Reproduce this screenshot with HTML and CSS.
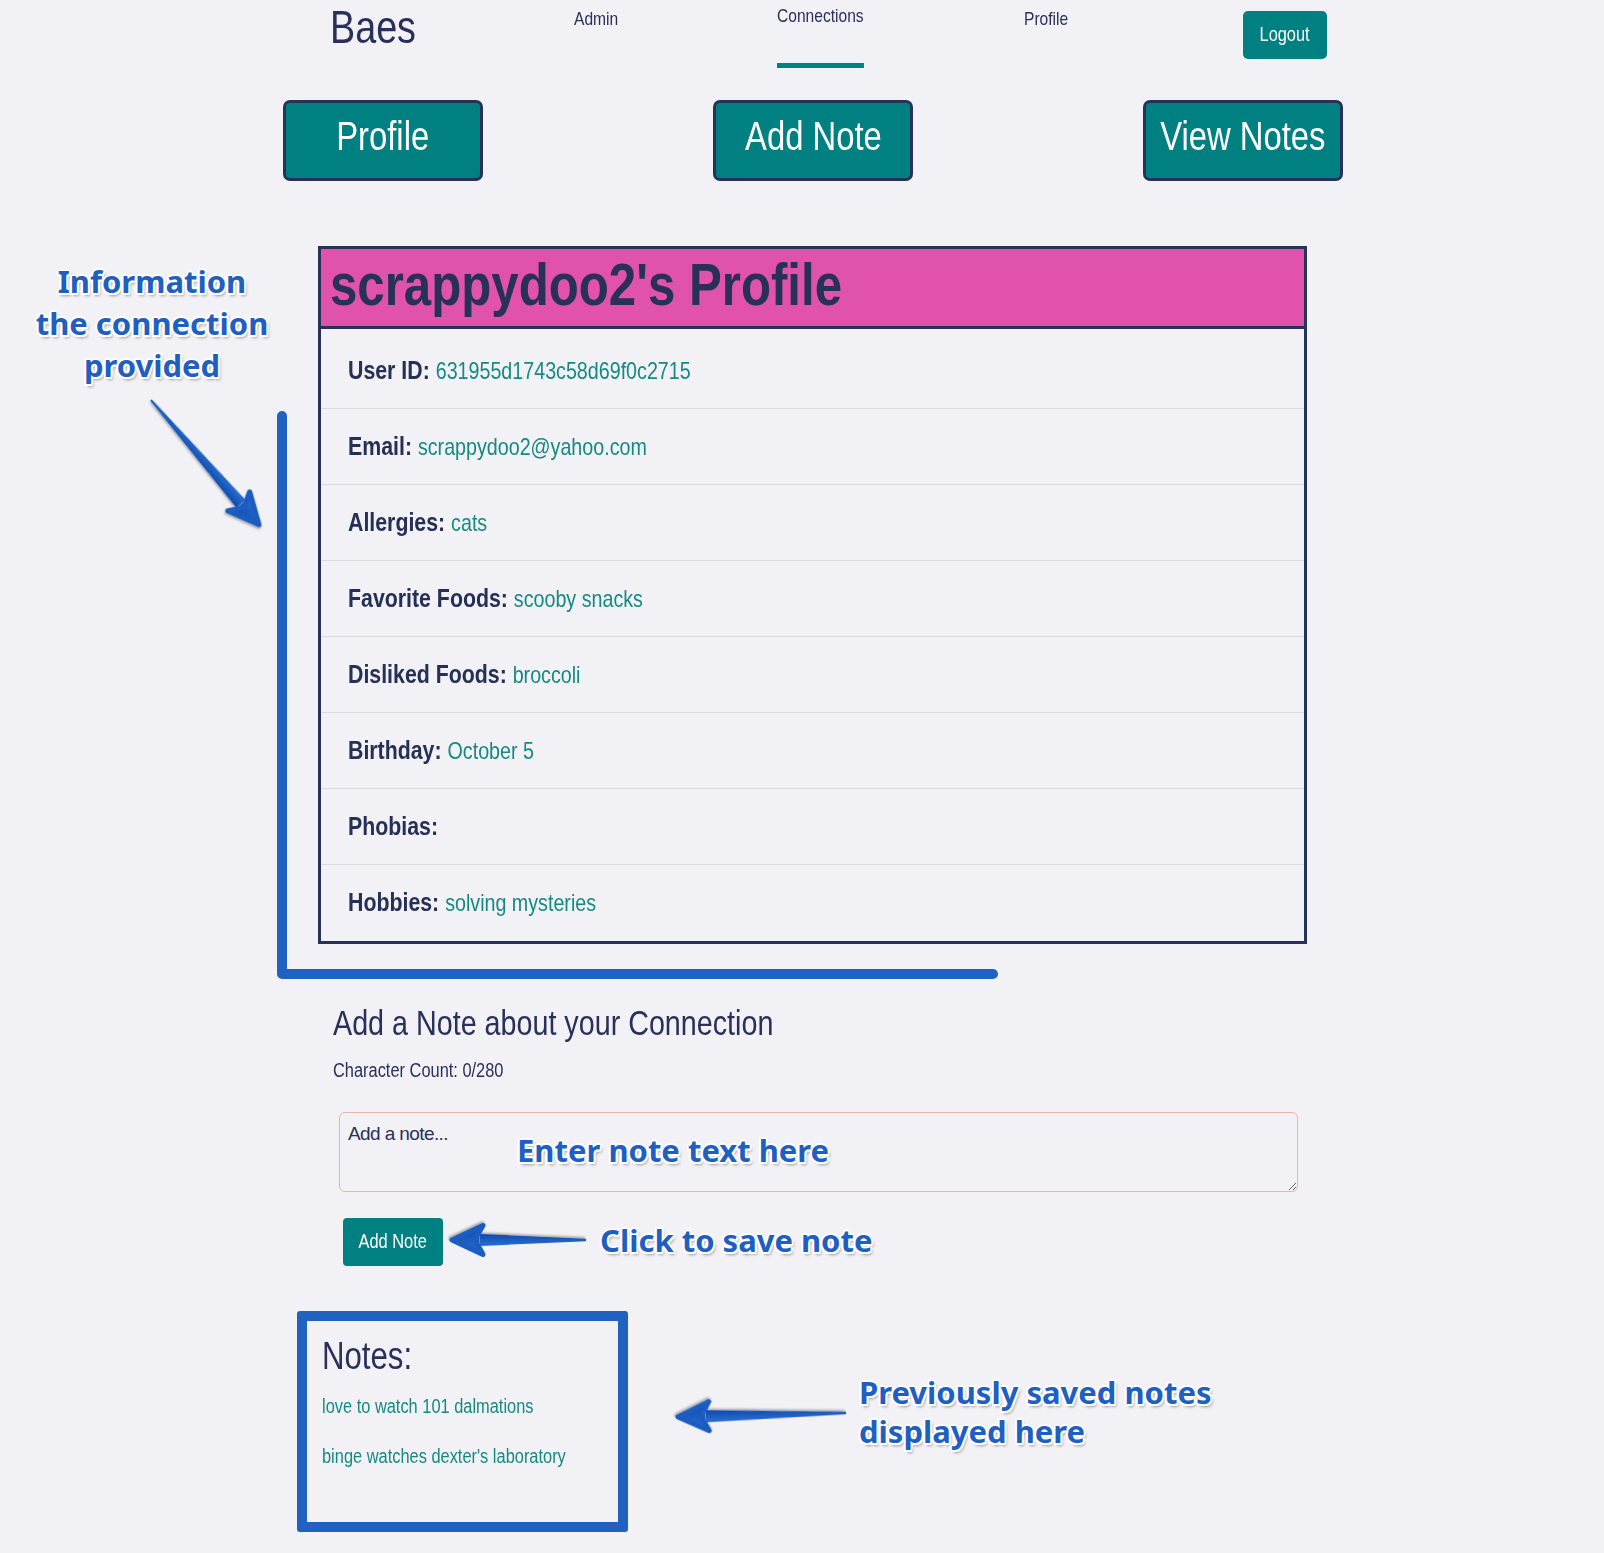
FILE: index.html
```html
<!DOCTYPE html>
<html lang="en">
<head>
<meta charset="utf-8">
<title>Baes - Connection Profile</title>
<link rel="stylesheet" href="styles.css">
</head>
<body>
<div class="page">
  <ul class="topnav">
    <li class="nav-item nav-brand-item"><a class="nav-brand sq">Baes</a></li>
    <li class="nav-item nav-admin"><a class="nav-link sq">Admin</a></li>
    <li class="nav-item nav-conn"><a class="nav-link active sq">Connections</a></li>
    <li class="nav-item nav-prof"><a class="nav-link sq">Profile</a></li>
    <li class="nav-item"><button class="logout"><span class="sq sq-c">Logout</span></button></li>
  </ul>

  <div class="tabs">
    <button class="tab-btn"><span class="sq sq-c">Profile</span></button>
    <button class="tab-btn"><span class="sq sq-c">Add Note</span></button>
    <button class="tab-btn"><span class="sq sq-c">View Notes</span></button>
  </div>

  <section class="profile-card">
    <h1 class="profile-title"><span class="sq">scrappydoo2's Profile</span></h1>
    <ul class="fields">
      <li class="field"><span class="sq"><span class="label">User ID:</span> <span class="value">631955d1743c58d69f0c2715</span></span></li>
      <li class="field"><span class="sq"><span class="label">Email:</span> <span class="value">scrappydoo2@yahoo.com</span></span></li>
      <li class="field"><span class="sq"><span class="label">Allergies:</span> <span class="value">cats</span></span></li>
      <li class="field"><span class="sq"><span class="label">Favorite Foods:</span> <span class="value">scooby snacks</span></span></li>
      <li class="field"><span class="sq"><span class="label">Disliked Foods:</span> <span class="value">broccoli</span></span></li>
      <li class="field"><span class="sq"><span class="label">Birthday:</span> <span class="value">October 5</span></span></li>
      <li class="field"><span class="sq"><span class="label">Phobias:</span> <span class="value"></span></span></li>
      <li class="field"><span class="sq"><span class="label">Hobbies:</span> <span class="value">solving mysteries</span></span></li>
    </ul>
  </section>

  <section class="note-form">
    <h2 class="note-heading"><span class="sq">Add a Note about your Connection</span></h2>
    <p class="char-count"><span class="sq">Character Count: 0/280</span></p>
    <textarea class="note-input" placeholder="Add a note..."></textarea>
    <button class="add-note"><span class="sq sq-c">Add Note</span></button>
  </section>

  <section class="notes-box">
    <h3 class="notes-title"><span class="sq">Notes:</span></h3>
    <p class="note"><span class="sq">love to watch 101 dalmations</span></p>
    <p class="note note-second"><span class="sq">binge watches dexter's laboratory</span></p>
  </section>

  <svg class="overlay" width="1604" height="1553" viewBox="0 0 1604 1553" aria-hidden="true">
    <defs>
      <linearGradient id="ag" x1="0" y1="0" x2="0" y2="1">
        <stop offset="0" stop-color="#2c6fd2"/>
        <stop offset="1" stop-color="#0c4aab"/>
      </linearGradient>
      <filter id="sh" x="-20%" y="-50%" width="140%" height="200%">
        <feDropShadow dx="1" dy="1.5" stdDeviation="0.8" flood-color="#000" flood-opacity="0.35"/>
      </filter>
    </defs>
    <path d="M282 416 V974 H993" fill="none" stroke="#2162c0" stroke-width="10" stroke-linecap="round" stroke-linejoin="round"/>
    <g filter="url(#sh)" transform="translate(151 400) rotate(49.1)">
      <path d="M0 -1 L137 -6 L137 6 L0 1 Z" fill="url(#ag)"/>
      <path d="M165 0 L134 -14.5 L140 -4 L140 4 L134 14.5 Z" fill="url(#ag)" stroke="#1a5cc0" stroke-width="5" stroke-linejoin="round"/>
    </g>
    <g filter="url(#sh)" transform="translate(586 1240) rotate(180)">
      <path d="M0 -1.2 L106 -6 L106 6 L0 1.2 Z" fill="url(#ag)"/>
      <path d="M134 0 L103 -14.5 L109 -4 L109 4 L103 14.5 Z" fill="url(#ag)" stroke="#1a5cc0" stroke-width="5" stroke-linejoin="round"/>
    </g>
    <g filter="url(#sh)" transform="translate(846 1413) rotate(178.65)">
      <path d="M0 -1.2 L140 -6 L140 6 L0 1.2 Z" fill="url(#ag)"/>
      <path d="M168 0 L137 -14.5 L143 -4 L143 4 L137 14.5 Z" fill="url(#ag)" stroke="#1a5cc0" stroke-width="5" stroke-linejoin="round"/>
    </g>
  </svg>

  <div class="callout callout-info">Information<br>the connection<br>provided</div>
  <div class="callout callout-enter">Enter note text here</div>
  <div class="callout callout-click">Click to save note</div>
  <div class="callout callout-notes">Previously saved notes<br>displayed here</div>
</div>
</body>
</html>
```

FILE: styles.css
```css
* { box-sizing: border-box; }

body {
  margin: 0;
  background: #f2f1f5;
  font-family: "Liberation Sans", Arial, sans-serif;
  color: #29305a;
}

.page {
  position: relative;
  width: 1604px;
  height: 1553px;
  overflow: hidden;
}

/* narrow lettering (the app font is a tall, condensed face) */
.sq {
  display: inline-block;
  white-space: nowrap;
  transform: scaleX(0.82);
  transform-origin: left center;
}
.sq-c { transform-origin: center center; }

/* top navigation */
.topnav {
  display: flex;
  align-items: flex-start;
  height: 70px;
  margin: 0;
  padding: 0 0 0 330px;
  list-style: none;
}
.nav-brand-item { width: 244px; }
.nav-admin { width: 203px; }
.nav-conn { width: 247px; }
.nav-prof { width: 219px; }

.nav-brand {
  font-size: 46px;
  line-height: 50px;
  padding-top: 2px;
  color: #29305a;
}
.nav-link {
  font-size: 19px;
  line-height: 24px;
  padding-top: 7px;
  color: #29305a;
  text-decoration: none;
}
.nav-link.active {
  padding-top: 4px;
  padding-bottom: 35px;
  border-bottom: 5px solid #008080;
}
.logout {
  display: flex;
  align-items: center;
  justify-content: center;
  margin-top: 11px;
  width: 84px;
  height: 48px;
  padding: 0 0 2px;
  border: 0;
  border-radius: 5px;
  background: #008080;
  color: #fff;
  font-family: inherit;
  font-size: 20px;
  line-height: 24px;
}

/* big tab buttons */
.tabs {
  display: flex;
  justify-content: space-between;
  width: 1060px;
  margin: 30px 0 0 283px;
}
.tab-btn {
  display: flex;
  align-items: center;
  justify-content: center;
  width: 200px;
  height: 81px;
  padding: 0 0 9px;
  border: 3px solid #283258;
  border-radius: 7px;
  background: #008080;
  color: #fff;
  font-family: inherit;
  font-size: 40px;
  line-height: 66px;
}

/* profile card */
.profile-card {
  width: 989px;
  margin: 65px 0 0 318px;
  border: 3px solid #283258;
}
.profile-title {
  margin: 0;
  height: 80px;
  padding: 0 0 6px 9px;
  background: #e052ab;
  border-bottom: 3px solid #283258;
  font-size: 60px;
  font-weight: 700;
  line-height: 71px;
  color: #283258;
  white-space: nowrap;
}
.fields {
  list-style: none;
  margin: 0;
  padding: 0;
}
.field {
  height: 76px;
  padding-left: 27px;
  border-bottom: 1px solid #dcdbe0;
  font-size: 26px;
  line-height: 75px;
  white-space: nowrap;
}
.field:first-child {
  height: 80px;
  padding-top: 4px;
}
.field:last-child { border-bottom: 0; }
.label {
  font-weight: 700;
  color: #262f55;
}
.value {
  font-size: 24px;
  line-height: 1;
  color: #168a80;
}

/* note form */
.note-heading {
  margin: 58px 0 0 333px;
  font-size: 35px;
  font-weight: 400;
  line-height: 42px;
  color: #29305a;
}
.char-count {
  margin: 14px 0 0 333px;
  font-size: 20px;
  line-height: 24px;
}
.note-input {
  display: block;
  width: 959px;
  height: 80px;
  margin: 30px 0 0 339px;
  padding: 9px 8px;
  border: 1px solid #f1b2a0;
  border-radius: 6px;
  background: transparent;
  font-family: inherit;
  font-size: 19px;
  letter-spacing: -0.6px;
  line-height: 24px;
  color: #29305a;
}
.note-input::placeholder {
  color: #29305a;
  opacity: 1;
}
.add-note {
  display: flex;
  align-items: center;
  justify-content: center;
  width: 100px;
  height: 48px;
  margin: 26px 0 0 343px;
  padding: 0 0 2px;
  border: 0;
  border-radius: 4px;
  background: #008080;
  color: #fff;
  font-family: inherit;
  font-size: 20px;
  line-height: 24px;
}

/* notes box */
.notes-box {
  width: 331px;
  height: 221px;
  margin: 45px 0 0 297px;
  padding: 12px 15px 0;
  border: 10px solid #2162c0;
  border-radius: 3px;
}
.notes-title {
  margin: 0;
  font-size: 38px;
  font-weight: 400;
  line-height: 46px;
  color: #29305a;
}
.note {
  margin: 15px 0 0;
  font-size: 20px;
  line-height: 24px;
  color: #168a80;
  white-space: nowrap;
}
.note-second { margin-top: 26px; }

/* annotation overlay */
.overlay {
  position: absolute;
  top: 0;
  left: 0;
  pointer-events: none;
}
.callout {
  position: absolute;
  font-family: "Noto Sans", "Open Sans", sans-serif;
  font-weight: 700;
  font-size: 31px;
  color: #1f5fc2;
  white-space: nowrap;
  text-shadow:
    2px 0 0 #fff, -2px 0 0 #fff, 0 2px 0 #fff, 0 -2px 0 #fff,
    1.5px 1.5px 0 #fff, -1.5px 1.5px 0 #fff, 1.5px -1.5px 0 #fff, -1.5px -1.5px 0 #fff,
    2px 3px 3px rgba(0, 0, 0, 0.35);
}
.callout-info {
  left: 0;
  top: 260px;
  width: 304px;
  text-align: center;
  line-height: 42px;
}
.callout-enter {
  left: 517px;
  top: 1130px;
  line-height: 40px;
}
.callout-click {
  left: 600px;
  top: 1220px;
  line-height: 40px;
}
.callout-notes {
  left: 859px;
  top: 1373px;
  line-height: 39px;
}
```
